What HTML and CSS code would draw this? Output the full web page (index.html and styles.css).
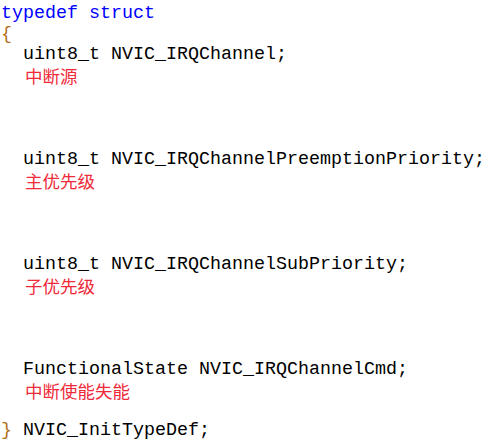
FILE: index.html
```html
<!DOCTYPE html>
<html lang="zh-CN">
<head>
<meta charset="utf-8">
<title>NVIC_InitTypeDef</title>
<link rel="stylesheet" href="styles.css">
</head>
<body>
<div class="code">
  <div class="line kw">typedef struct</div>
  <div class="line brace">{</div>
  <div class="members">
    <div class="member">
      <div class="line indent">uint8_t NVIC_IRQChannel;</div>
      <div class="note">中断源</div>
    </div>
    <div class="member">
      <div class="line indent">uint8_t NVIC_IRQChannelPreemptionPriority;</div>
      <div class="note">主优先级</div>
    </div>
    <div class="member">
      <div class="line indent">uint8_t NVIC_IRQChannelSubPriority;</div>
      <div class="note">子优先级</div>
    </div>
    <div class="member">
      <div class="line indent">FunctionalState NVIC_IRQChannelCmd;</div>
      <div class="note">中断使能失能</div>
    </div>
  </div>
  <div class="line end"><span class="brace">}</span> NVIC_InitTypeDef;</div>
</div>
</body>
</html>
```
FILE: styles.css
```css
html, body {
  margin: 0;
  padding: 0;
  background: #ffffff;
}

.code {
  padding: 4px 0 0 1px;
  font-family: "Liberation Mono", "DejaVu Sans Mono", monospace;
  font-size: 18.33px;
  color: #000000;
}

.line {
  height: 20.5px;
  line-height: 20.5px;
  white-space: pre;
}

.kw {
  color: #0000ff;
}

.brace {
  color: #b07020;
}

.indent {
  padding-left: 22px;
}

.members {
  display: flex;
  flex-direction: column;
  gap: 64.5px;
}

.member {
  display: flex;
  flex-direction: column;
}

.note {
  height: 20px;
  line-height: 20px;
  padding-left: 24px;
  font-family: "Noto Sans CJK SC", "Noto Sans", sans-serif;
  font-size: 17.5px;
  color: #ef2a3a;
}

.end {
  margin-top: 20.5px;
}
```
